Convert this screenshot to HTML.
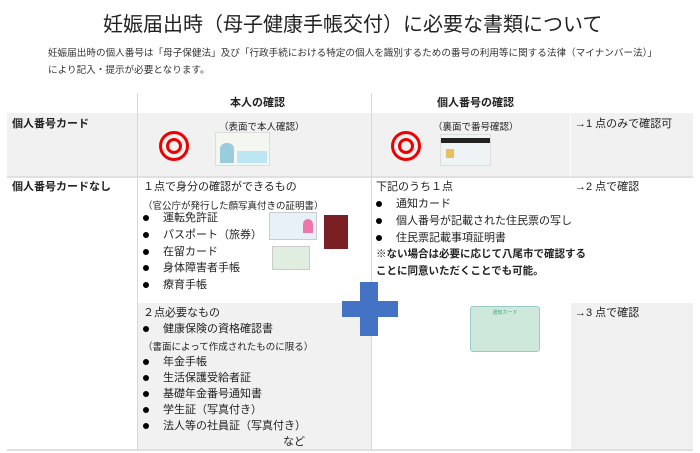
<!DOCTYPE html>
<html><head><meta charset="utf-8"><style>
*{margin:0;padding:0;box-sizing:border-box}
body{width:700px;height:453px;background:#fff;position:relative;overflow:hidden;font-family:"Liberation Sans","Noto Sans CJK JP",sans-serif;color:#222}
.a{position:absolute;white-space:nowrap}
.t{font-size:11px;line-height:12px}
.s{font-size:9.5px}
.b{font-weight:bold}
.g{position:absolute;background:#f1f1f1}
.vl{position:absolute;width:1px;background:#d8d8d8}
.hl{position:absolute;height:2px;background:#e0e0e0}
.dot{display:inline-block;width:6px;height:6px;border-radius:50%;background:#000;margin-right:14px;vertical-align:middle}
</style></head><body>
<div class="a" style="left:103px;top:12px;font-size:20px;line-height:26px;color:#222">妊娠届出時（母子健康手帳交付）に必要な書類について</div>
<div class="a" style="left:48px;top:45px;font-size:9.6px;color:#333">妊娠届出時の個人番号は「母子保健法」及び「行政手続における特定の個人を識別するための番号の利用等に関する法律（マイナンバー法）」</div>
<div class="a" style="left:48px;top:62px;font-size:9.6px;color:#333">により記入・提示が必要となります。</div>

<div class="g" style="left:7px;top:113px;width:686px;height:64px"></div>
<div class="g" style="left:138px;top:303px;width:233px;height:147px"></div>
<div class="g" style="left:571px;top:303px;width:122px;height:147px"></div>
<div class="hl" style="left:7px;top:176px;width:686px"></div>
<div class="hl" style="left:7px;top:449px;width:686px"></div>
<div class="vl" style="left:137px;top:93px;height:357px"></div>
<div class="vl" style="left:371px;top:93px;height:357px"></div>
<div class="vl" style="left:570px;top:113px;height:64px;background:#fff"></div>

<div class="a t b" style="left:230px;top:97px">本人の確認</div>
<div class="a t b" style="left:437px;top:97px">個人番号の確認</div>
<div class="a t b" style="left:12px;top:118px">個人番号カード</div>
<div class="a s" style="left:219px;top:119px">（表面で本人確認）</div>
<div class="a s" style="left:433px;top:119px">（裏面で番号確認）</div>
<div class="a t" style="left:575px;top:118px">→1 点のみで確認可</div>

<div class="a" style="left:159px;top:131px;width:30px;height:30px;border:3px solid #e00;border-radius:50%"></div>
<div class="a" style="left:166px;top:138px;width:16px;height:16px;border:3px solid #e00;border-radius:50%"></div>
<div class="a" style="left:391px;top:131px;width:30px;height:30px;border:3px solid #e00;border-radius:50%"></div>
<div class="a" style="left:398px;top:138px;width:16px;height:16px;border:3px solid #e00;border-radius:50%"></div>

<div class="a" style="left:215px;top:132px;width:55px;height:34px;background:#f4f7ef;border:1px solid #ddd"><div style="position:absolute;left:4px;top:10px;width:14px;height:20px;background:#9cd;border-radius:6px 6px 0 0"></div><div style="position:absolute;left:21px;top:18px;width:30px;height:12px;background:#bde6f5"></div></div>
<div class="a" style="left:440px;top:134px;width:51px;height:32px;background:#eef3f5;border:1px solid #ddd"><div style="height:5px;background:#222;margin-top:3px"></div><div style="position:absolute;left:5px;top:14px;width:8px;height:9px;background:#e8c060"></div></div>

<div class="a t b" style="left:12px;top:181px">個人番号カードなし</div>
<div class="a t" style="left:143px;top:181px">１点で身分の確認ができるもの</div>
<div class="a s" style="left:143px;top:198px">（官公庁が発行した顔写真付きの証明書）</div>
<div class="a t" style="left:143px;top:210px;line-height:16.8px"><span class="dot"></span>運転免許証<br><span class="dot"></span>パスポート（旅券）<br><span class="dot"></span>在留カード<br><span class="dot"></span>身体障害者手帳<br><span class="dot"></span>療育手帳</div>
<div class="a" style="left:269px;top:212px;width:48px;height:28px;background:#e8f0f8;border:1px solid #ccc"><div style="position:absolute;right:3px;top:6px;width:10px;height:14px;background:#e7a;border-radius:5px 5px 0 0"></div></div>
<div class="a" style="left:324px;top:215px;width:24px;height:34px;background:#7a1f24"></div>
<div class="a" style="left:272px;top:246px;width:38px;height:24px;background:#dfeee0;border:1px solid #ccc"></div>

<div class="a t" style="left:376px;top:181px">下記のうち１点</div>
<div class="a t" style="left:376px;top:196px;line-height:17px"><span class="dot"></span>通知カード<br><span class="dot"></span>個人番号が記載された住民票の写し<br><span class="dot"></span>住民票記載事項証明書</div>
<div class="a t b" style="left:376px;top:246px;line-height:17px;font-size:10.5px">※ない場合は必要に応じて八尾市で確認する<br>ことに同意いただくことでも可能。</div>
<div class="a t" style="left:575px;top:181px">→2 点で確認</div>

<div class="a t" style="left:143px;top:307px">２点必要なもの</div>
<div class="a t" style="left:143px;top:323px"><span class="dot"></span>健康保険の資格確認書</div>
<div class="a s" style="left:143px;top:339px">（書面によって作成されたものに限る）</div>
<div class="a t" style="left:143px;top:354px;line-height:16px"><span class="dot"></span>年金手帳<br><span class="dot"></span>生活保護受給者証<br><span class="dot"></span>基礎年金番号通知書<br><span class="dot"></span>学生証（写真付き）<br><span class="dot"></span>法人等の社員証（写真付き）</div>
<div class="a t" style="left:283px;top:436px">など</div>
<div class="a t" style="left:575px;top:307px">→3 点で確認</div>
<div class="a" style="left:470px;top:306px;width:70px;height:46px;background:#cfe8dc;border:1px solid #9cc;border-radius:3px"><div style="text-align:center;font-size:5px;color:#4a8;margin-top:2px">通知カード</div></div>

<div class="a" style="left:342px;top:301px;width:56px;height:16px;background:#4472c4"></div>
<div class="a" style="left:360px;top:282px;width:18px;height:54px;background:#4472c4"></div>
</body></html>
